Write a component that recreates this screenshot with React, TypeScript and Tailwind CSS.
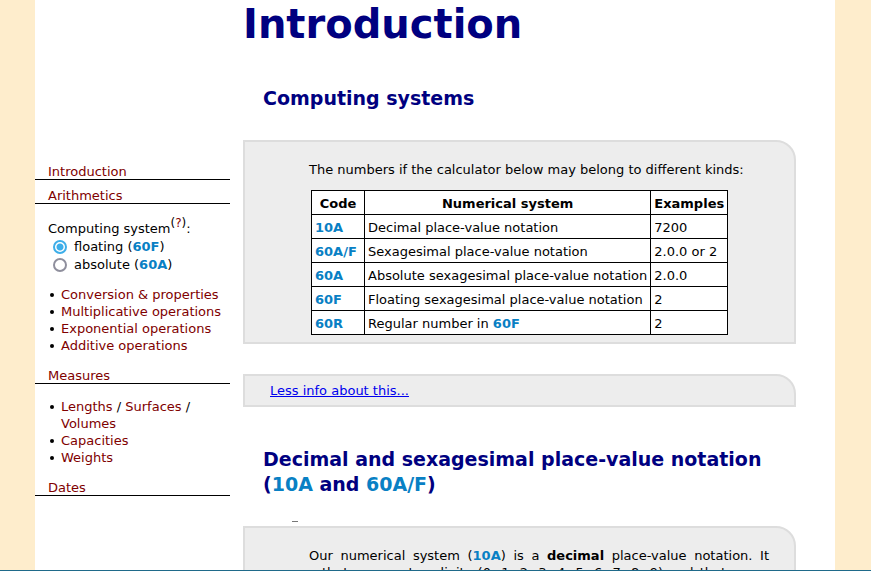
import type { ReactNode } from "react";

function Code({ children }: { children: ReactNode }) {
  return <b className="font-bold text-[#0880c4]">{children}</b>;
}

function SideLink({ children }: { children: ReactNode }) {
  return <a href="#top" className="text-[#800000]">{children}</a>;
}

function SideHeading({ children }: { children: ReactNode }) {
  return (
    <div className="border-b border-black pt-[2px] pl-[13px] leading-[15px]">
      <SideLink>{children}</SideLink>
    </div>
  );
}

function SideItem({ children }: { children: ReactNode }) {
  return (
    <li className="flex gap-[7px] before:mt-[7px] before:size-1 before:shrink-0 before:rounded-full before:bg-black before:content-['']">
      <span>{children}</span>
    </li>
  );
}

function SubHeading({ className, children }: { className: string; children: ReactNode }) {
  return (
    <h2 className={"pl-[20px] text-[19px] leading-[25px] font-bold text-[#000080] " + className}>
      {children}
    </h2>
  );
}

function Panel({ className, children }: { className: string; children: ReactNode }) {
  return (
    <div className={"rounded-tr-[20px] border-2 border-[#dddddd] bg-[#ededed] " + className}>
      {children}
    </div>
  );
}

const systems: { code: string; name: ReactNode; example: string }[] = [
  { code: "10A", name: "Decimal place-value notation", example: "7200" },
  { code: "60A/F", name: "Sexagesimal place-value notation", example: "2.0.0 or 2" },
  { code: "60A", name: "Absolute sexagesimal place-value notation", example: "2.0.0" },
  { code: "60F", name: "Floating sexagesimal place-value notation", example: "2" },
  { code: "60R", name: <>Regular number in <Code>60F</Code></>, example: "2" },
];

const radio =
  "mr-[7px] ml-[5px] size-[14px] appearance-none rounded-full border-2 border-[#8f8f9d] bg-white checked:border-[#3daee9] checked:bg-[radial-gradient(circle,#3daee9_3px,#ffffff_4px)]";
const cell = "border border-black px-[3px] pt-[4px] pb-[2px]";

export default function App() {
  return (
    <div className="h-screen overflow-hidden border-b border-[#1f6a8a] bg-[#feedcc] pr-9 pl-[35px] font-[Verdana,'DejaVu_Sans',sans-serif] text-[13px] leading-[17px] text-black">
      <div className="flex min-h-full items-start gap-[13px] bg-white pr-[39px]">
        <nav className="w-[195px] shrink-0 pt-[162px]">
          <SideHeading>Introduction</SideHeading>
          <div className="pt-[6px]">
            <SideHeading>Arithmetics</SideHeading>
          </div>
          <form className="pt-4 pl-[13px] leading-[18px]">
            <div>
              Computing system
              <sup className="text-[12px] leading-none">(<SideLink>?</SideLink>)</sup>:
            </div>
            <label className="flex items-center">
              <input type="radio" name="system" defaultChecked className={radio} />
              <span>floating (<Code>60F</Code>)</span>
            </label>
            <label className="flex items-center">
              <input type="radio" name="system" className={radio} />
              <span>absolute (<Code>60A</Code>)</span>
            </label>
          </form>
          <ul className="py-3 pl-[15px]">
            <SideItem><SideLink>Conversion &amp; properties</SideLink></SideItem>
            <SideItem><SideLink>Multiplicative operations</SideLink></SideItem>
            <SideItem><SideLink>Exponential operations</SideLink></SideItem>
            <SideItem><SideLink>Additive operations</SideLink></SideItem>
          </ul>
          <SideHeading>Measures</SideHeading>
          <ul className="pt-[14px] pb-3 pl-[15px]">
            <SideItem>
              <SideLink>Lengths</SideLink> / <SideLink>Surfaces</SideLink> / <SideLink>Volumes</SideLink>
            </SideItem>
            <SideItem><SideLink>Capacities</SideLink></SideItem>
            <SideItem><SideLink>Weights</SideLink></SideItem>
          </ul>
          <SideHeading>Dates</SideHeading>
        </nav>
        <main className="min-w-0 flex-1">
          <h1 className="text-[40px] leading-[48px] font-bold text-[#000080]">Introduction</h1>
          <SubHeading className="mt-[38px]">Computing systems</SubHeading>
          <Panel className="mt-[29px] pt-[19px] pb-[7px] pl-16">
            <p>The numbers if the calculator below may belong to different kinds:</p>
            <table className="mt-3 ml-[2px] border-collapse bg-white whitespace-nowrap">
              <thead>
                <tr>
                  <th className={cell + " w-[53px]"}>Code</th>
                  <th className={cell}>Numerical system</th>
                  <th className={cell}>Examples</th>
                </tr>
              </thead>
              <tbody>
                {systems.map((s) => (
                  <tr key={s.code}>
                    <td className={cell}><Code>{s.code}</Code></td>
                    <td className={cell}>{s.name}</td>
                    <td className={cell}>{s.example}</td>
                  </tr>
                ))}
              </tbody>
            </table>
          </Panel>
          <Panel className="mt-[30px] py-[6px] pl-[25px]">
            <a href="#info" className="text-[#0000ee] underline">Less info about this...</a>
          </Panel>
          <SubHeading className="mt-10">
            Decimal and sexagesimal place-value notation (<Code>10A</Code> and <Code>60A/F</Code>)
          </SubHeading>
          <hr className="mt-[24px] ml-[49px] w-[6px] border-t border-[#777777]" />
          <Panel className="mt-1 pt-[19px] pr-[25px] pb-5 pl-16 text-justify">
            <p>
              Our numerical system (<Code>10A</Code>) is a <b>decimal</b> place-value notation. It
              s&nbsp;that we use ten digits (0, 1, 2, 3, 4, 5, 6, 7, 8, 9) and that every
              number
            </p>
          </Panel>
        </main>
      </div>
    </div>
  );
}
